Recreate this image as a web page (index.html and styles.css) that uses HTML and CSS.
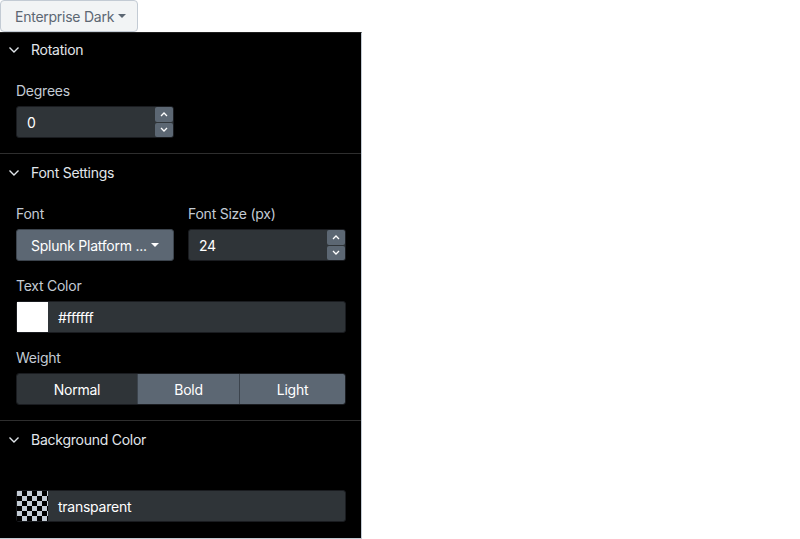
FILE: index.html
```html
<!DOCTYPE html>
<html>
<head>
<meta charset="utf-8">
<link rel="stylesheet" href="styles.css">
</head>
<body>
<button class="theme-btn">Enterprise Dark <span class="caret"></span></button>
<div class="panel">
  <section class="section first">
    <div class="sec-head">
      <svg class="chev" width="12" height="8" viewBox="0 0 12 8"><path d="M1.5 1.5 L6 6 L10.5 1.5" fill="none" stroke="#e1e6eb" stroke-width="1.4"/></svg>
      <span>Rotation</span>
    </div>
    <div class="sec-body">
      <div class="field">
        <div class="label">Degrees</div>
        <div class="num small">
          <span class="num-val">0</span>
          <div class="spin">
            <div class="spin-btn"><svg width="8" height="5" viewBox="0 0 8 5"><path d="M1 4 L4 1 L7 4" fill="none" stroke="#fff" stroke-width="1.3"/></svg></div>
            <div class="spin-btn"><svg width="8" height="5" viewBox="0 0 8 5"><path d="M1 1 L4 4 L7 1" fill="none" stroke="#fff" stroke-width="1.3"/></svg></div>
          </div>
        </div>
      </div>
    </div>
  </section>
  <section class="section">
    <div class="sec-head">
      <svg class="chev" width="12" height="8" viewBox="0 0 12 8"><path d="M1.5 1.5 L6 6 L10.5 1.5" fill="none" stroke="#e1e6eb" stroke-width="1.4"/></svg>
      <span>Font Settings</span>
    </div>
    <div class="sec-body">
      <div class="row2">
        <div class="field">
          <div class="label">Font</div>
          <div class="select">Splunk Platform ... <span class="caret light"></span></div>
        </div>
        <div class="field">
          <div class="label">Font Size (px)</div>
          <div class="num">
            <span class="num-val">24</span>
            <div class="spin">
              <div class="spin-btn"><svg width="8" height="5" viewBox="0 0 8 5"><path d="M1 4 L4 1 L7 4" fill="none" stroke="#fff" stroke-width="1.3"/></svg></div>
              <div class="spin-btn"><svg width="8" height="5" viewBox="0 0 8 5"><path d="M1 1 L4 4 L7 1" fill="none" stroke="#fff" stroke-width="1.3"/></svg></div>
            </div>
          </div>
        </div>
      </div>
      <div class="field">
        <div class="label">Text Color</div>
        <div class="color">
          <span class="swatch white"></span>
          <span class="color-val">#ffffff</span>
        </div>
      </div>
      <div class="field">
        <div class="label">Weight</div>
        <div class="seg">
          <div class="seg-btn active">Normal</div>
          <div class="seg-btn">Bold</div>
          <div class="seg-btn">Light</div>
        </div>
      </div>
    </div>
  </section>
  <section class="section last">
    <div class="sec-head">
      <svg class="chev" width="12" height="8" viewBox="0 0 12 8"><path d="M1.5 1.5 L6 6 L10.5 1.5" fill="none" stroke="#e1e6eb" stroke-width="1.4"/></svg>
      <span>Background Color</span>
    </div>
    <div class="sec-body bg-body">
      <div class="color">
        <span class="swatch checker"></span>
        <span class="color-val">transparent</span>
      </div>
    </div>
  </section>
</div>
</body>
</html>
```
FILE: styles.css
```css
* { box-sizing: border-box; }
html, body { margin: 0; padding: 0; background: #fff; }
body { font-family: "Inter", "Liberation Sans", sans-serif; font-size: 14px; letter-spacing: -0.25px; }

.theme-btn {
  display: flex; align-items: center; gap: 4px;
  height: 32px; width: 138px; padding: 0 0 0 14px;
  background: #f2f4f5; color: #5c6773;
  border: 1px solid #c3cbd4; border-radius: 4px;
  font-family: inherit; font-size: 14px; letter-spacing: -0.25px;
}
.caret { display: inline-block; width: 0; height: 0; border-left: 4px solid transparent; border-right: 4px solid transparent; border-top: 4px solid #5c6773; }
.caret.light { border-top-color: #fff; margin-left: 4px; }

.panel {
  width: 362px; height: 507px;
  background: #000;
  border-top: 1px solid #1f1f1f;
  border-right: 1px solid #c3cbd4;
  border-bottom: 1px solid #c3cbd4;
  display: flex; flex-direction: column;
}
.section { border-bottom: 1px solid #2e2e2e; }
.section.last { border-bottom: none; }
.sec-head {
  height: 36px; display: flex; align-items: center; gap: 11px;
  padding-left: 8px; color: #e1e6eb; font-size: 14px;
}
.first .sec-head { height: 32px; }
.chev { margin-top: 1px; }
.sec-body { padding: 15px 15px 15px 16px; display: flex; flex-direction: column; gap: 16px; }
.first .sec-body { padding-top: 17px; }
.bg-body { padding-top: 33px; }
.field { display: flex; flex-direction: column; gap: 7px; }
.label { color: #c3cbd4; font-size: 14px; line-height: 17px; }
.row2 { display: grid; grid-template-columns: 158px 158px; column-gap: 14px; }

.num {
  height: 32px; background: #2f3438; border: 1px solid #1a1c20; border-radius: 3px;
  display: flex; align-items: center; justify-content: space-between;
  color: #fff;
}
.num.small { width: 158px; }
.num-val { padding-left: 10px; }
.spin { display: flex; flex-direction: column; gap: 1px; height: 30px; }
.spin-btn {
  width: 18px; height: 14.5px; background: #5c6773; border-radius: 2px;
  display: flex; align-items: center; justify-content: center;
}
.select {
  height: 32px; background: #5c6773; border-radius: 3px; border: 1px solid #3c444d;
  color: #fff; display: flex; align-items: center; padding-left: 14px;
}
.color {
  height: 32px; background: #2f3438; border: 1px solid #1a1c20; border-radius: 3px;
  display: flex; align-items: center;
}
.swatch { width: 31px; height: 30px; display: block; }
.swatch.white { background: #fff; }
.swatch.checker {
  background-color: #c3cbd4;
  background-image:
    linear-gradient(45deg, #000 25%, transparent 25%, transparent 75%, #000 75%),
    linear-gradient(45deg, #000 25%, transparent 25%, transparent 75%, #000 75%);
  background-size: 10px 10px;
  background-position: 0 0, 5px 5px;
}
.color-val { color: #fff; padding-left: 10px; }
.seg {
  height: 32px; display: grid; grid-template-columns: 120px 102px 1fr;
  border: 1px solid #1a1c20; border-radius: 3px; overflow: hidden;
}
.seg-btn {
  background: #5c6773; color: #fff; display: flex; align-items: center; justify-content: center;
  border-left: 1px solid #3c444d;
}
.seg-btn.active { background: #2f3438; border-left: none; }
```
